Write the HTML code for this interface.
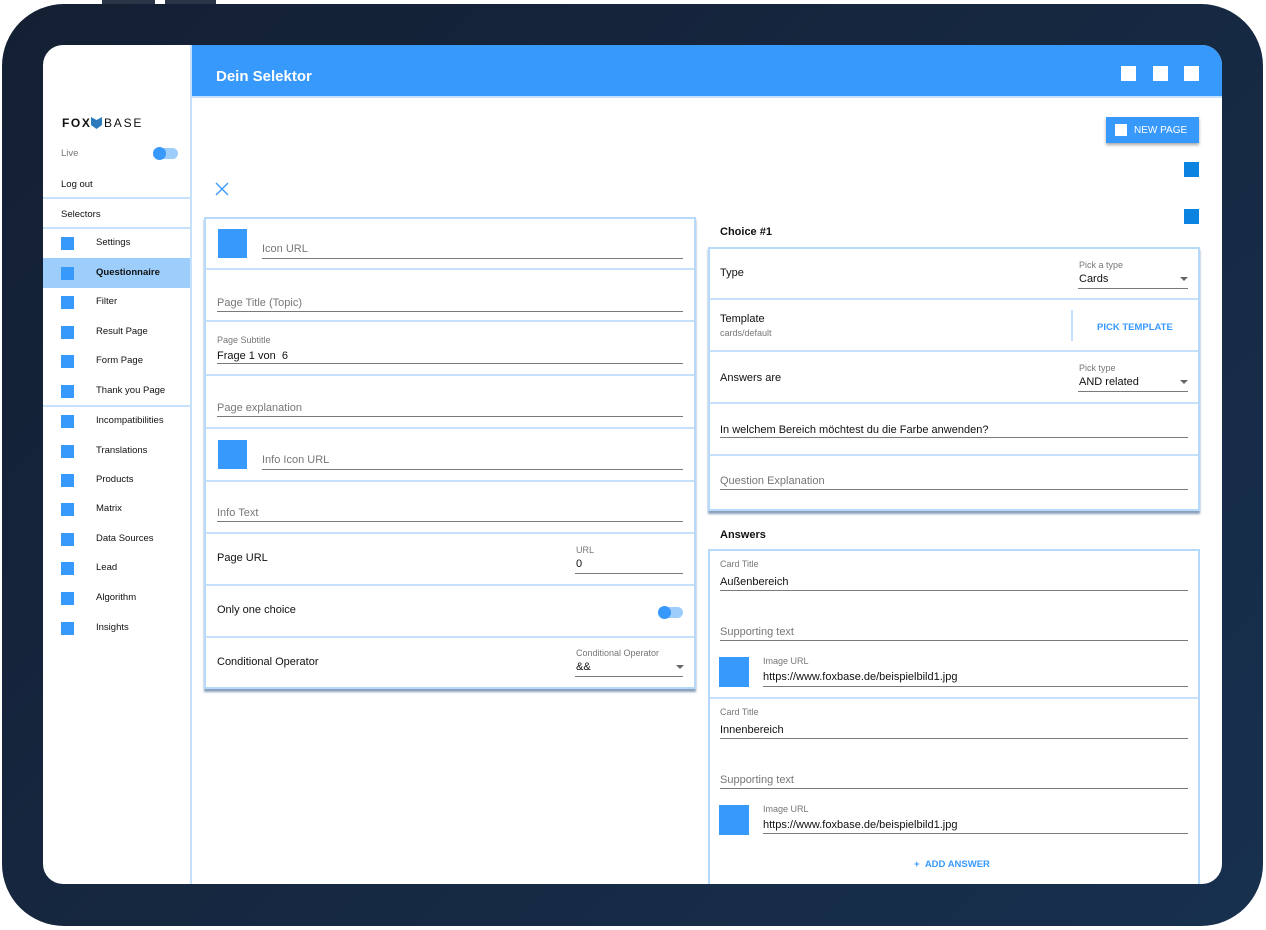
<!DOCTYPE html>
<html><head><meta charset="utf-8"><style>
*{margin:0;padding:0;box-sizing:border-box}
body{width:1266px;height:930px;background:#fff;position:relative;overflow:hidden;font-family:"Liberation Sans",Arial,sans-serif;color:#111}
div{position:absolute}
.t{white-space:nowrap;font-size:11px;line-height:13px}
.g{color:#777}
.s{font-size:9px;color:#777;line-height:11px}
.l{height:1px;background:#7a7a7a}
.sep{height:2px;background:#c5e1fb}
.sq{background:#3899fd}
.card{border:2px solid #b7d9fb;background:#fff;box-shadow:0 3px 2px rgba(40,80,130,.55)}
.ni{width:13px;height:13px;background:#3899fd;left:61px}
.nt{left:96px;font-size:9.5px;line-height:12px;white-space:nowrap}
.arr{width:0;height:0;border-left:4px solid transparent;border-right:4px solid transparent;border-top:4px solid #666}
</style></head><body>
<div style="left:102px;top:0;width:53px;height:4px;background:#2a3648"></div>
<div style="left:165px;top:0;width:51px;height:4px;background:#2a3648"></div>
<div style="left:2px;top:4px;width:1261px;height:922px;border-radius:62px;background:linear-gradient(135deg,#141f33,#17304e)"></div>
<div style="left:43px;top:45px;width:1179px;height:839px;border-radius:20px;background:#fff;overflow:hidden">
 <div style="left:148px;top:0;width:1031px;height:51px;background:#3899fd"></div>
 <div style="left:147px;top:0;width:2px;height:839px;background:#c5e1fb"></div>
 <div style="left:148px;top:51px;width:1031px;height:2px;background:#c5e1fb"></div>
 <div style="left:665px;top:504px;width:492px;height:340px;border:2px solid #b7d9fb;background:#fff"></div>
</div>
<div class="t" style="left:216px;top:68px;font-size:15px;line-height:18px;color:#fff;font-weight:bold">Dein Selektor</div>
<div style="left:1121px;top:66px;width:15px;height:15px;background:#fff"></div>
<div style="left:1153px;top:66px;width:15px;height:15px;background:#fff"></div>
<div style="left:1184px;top:66px;width:15px;height:15px;background:#fff"></div>
<!-- sidebar -->
<div class="t" style="left:62px;top:116px;font-size:12px;line-height:15px;letter-spacing:1.6px;font-weight:bold;color:#111">FOX</div>
<svg style="position:absolute;left:91px;top:117px" width="11" height="12"><path d="M0 0 L5.5 3 L11 0 L11 8 L5.5 12 L0 8Z" fill="#2d7bbd"/></svg>
<div class="t" style="left:104px;top:116px;font-size:12px;line-height:15px;letter-spacing:1.8px;color:#111">BASE</div>
<div class="t g" style="left:61px;top:147px;font-size:9.5px">Live</div>
<div style="left:153px;top:148px;width:25px;height:11px;border-radius:6px;background:#9ccdfb"></div>
<div style="left:153px;top:147px;width:13px;height:13px;border-radius:50%;background:#3899fd"></div>
<div class="t" style="left:61px;top:178px;font-size:9.5px">Log out</div>
<div class="sep" style="left:43px;top:197px;width:147px"></div>
<div class="t" style="left:61px;top:208px;font-size:9.5px">Selectors</div>
<div class="sep" style="left:43px;top:227px;width:147px"></div>
<div style="left:43px;top:258px;width:147px;height:30px;background:#9ccdfb"></div>
<div class="ni" style="top:237px"></div><div class="nt" style="top:237px">Settings</div>
<div class="ni" style="top:267px"></div><div class="nt" style="top:267px;font-weight:bold">Questionnaire</div>
<div class="ni" style="top:296px"></div><div class="nt" style="top:296px">Filter</div>
<div class="ni" style="top:326px"></div><div class="nt" style="top:326px">Result Page</div>
<div class="ni" style="top:355px"></div><div class="nt" style="top:355px">Form Page</div>
<div class="ni" style="top:385px"></div><div class="nt" style="top:385px">Thank you Page</div>
<div class="sep" style="left:43px;top:405px;width:147px"></div>
<div class="ni" style="top:415px"></div><div class="nt" style="top:415px">Incompatibilities</div>
<div class="ni" style="top:445px"></div><div class="nt" style="top:445px">Translations</div>
<div class="ni" style="top:474px"></div><div class="nt" style="top:474px">Products</div>
<div class="ni" style="top:503px"></div><div class="nt" style="top:503px">Matrix</div>
<div class="ni" style="top:533px"></div><div class="nt" style="top:533px">Data Sources</div>
<div class="ni" style="top:562px"></div><div class="nt" style="top:562px">Lead</div>
<div class="ni" style="top:592px"></div><div class="nt" style="top:592px">Algorithm</div>
<div class="ni" style="top:622px"></div><div class="nt" style="top:622px">Insights</div>
<!-- top right -->
<div style="left:1106px;top:117px;width:93px;height:26px;background:#3899fd;box-shadow:0 2px 3px rgba(0,0,0,.35)"></div>
<div style="left:1115px;top:124px;width:12px;height:12px;background:#fff"></div>
<div class="t" style="left:1134px;top:124px;font-size:10px;color:#fff">NEW PAGE</div>
<div style="left:1184px;top:162px;width:15px;height:15px;background:#0a84e0"></div>
<div style="left:1184px;top:209px;width:15px;height:15px;background:#0a84e0"></div>
<svg style="position:absolute;left:215px;top:182px" width="14" height="14"><path d="M1 1L13 13M13 1L1 13" stroke="#3899fd" stroke-width="1.3"/></svg>
<!-- left card -->
<div class="card" style="left:204px;top:217px;width:492px;height:472px"></div>
<div class="sep" style="left:206px;top:268px;width:488px"></div>
<div class="sep" style="left:206px;top:320px;width:488px"></div>
<div class="sep" style="left:206px;top:374px;width:488px"></div>
<div class="sep" style="left:206px;top:427px;width:488px"></div>
<div class="sep" style="left:206px;top:480px;width:488px"></div>
<div class="sep" style="left:206px;top:532px;width:488px"></div>
<div class="sep" style="left:206px;top:584px;width:488px"></div>
<div class="sep" style="left:206px;top:636px;width:488px"></div>
<div class="sq" style="left:218px;top:229px;width:29px;height:29px"></div>
<div class="t g" style="left:262px;top:243px">Icon URL</div><div class="l" style="left:262px;top:258px;width:421px"></div>
<div class="t g" style="left:217px;top:297px">Page Title (Topic)</div><div class="l" style="left:217px;top:311px;width:466px"></div>
<div class="t s" style="left:217px;top:335px">Page Subtitle</div>
<div class="t" style="left:217px;top:350px">Frage 1 von&nbsp; 6</div><div class="l" style="left:217px;top:363px;width:466px"></div>
<div class="t g" style="left:217px;top:402px">Page explanation</div><div class="l" style="left:217px;top:416px;width:466px"></div>
<div class="sq" style="left:218px;top:440px;width:29px;height:29px"></div>
<div class="t g" style="left:262px;top:454px">Info Icon URL</div><div class="l" style="left:262px;top:469px;width:421px"></div>
<div class="t g" style="left:217px;top:507px">Info Text</div><div class="l" style="left:217px;top:521px;width:466px"></div>
<div class="t" style="left:217px;top:552px">Page URL</div>
<div class="t s" style="left:576px;top:545px">URL</div>
<div class="t" style="left:576px;top:558px">0</div><div class="l" style="left:575px;top:573px;width:108px"></div>
<div class="t" style="left:217px;top:604px">Only one choice</div>
<div style="left:658px;top:607px;width:25px;height:11px;border-radius:6px;background:#9ccdfb"></div>
<div style="left:658px;top:606px;width:13px;height:13px;border-radius:50%;background:#3899fd"></div>
<div class="t" style="left:217px;top:656px">Conditional Operator</div>
<div class="t s" style="left:576px;top:648px">Conditional Operator</div>
<div class="t" style="left:576px;top:661px">&amp;&amp;</div><div class="arr" style="left:676px;top:665px"></div><div class="l" style="left:575px;top:676px;width:108px"></div>
<!-- right card 1 -->
<div class="t" style="left:720px;top:226px;font-weight:bold">Choice #1</div>
<div class="card" style="left:708px;top:247px;width:492px;height:264px"></div>
<div class="sep" style="left:710px;top:298px;width:488px"></div>
<div class="sep" style="left:710px;top:350px;width:488px"></div>
<div class="sep" style="left:710px;top:402px;width:488px"></div>
<div class="sep" style="left:710px;top:454px;width:488px"></div>
<div class="t" style="left:720px;top:267px">Type</div>
<div class="t s" style="left:1079px;top:260px">Pick a type</div>
<div class="t" style="left:1079px;top:273px">Cards</div><div class="arr" style="left:1180px;top:277px"></div><div class="l" style="left:1078px;top:288px;width:110px"></div>
<div class="t" style="left:720px;top:313px">Template</div>
<div class="t s" style="left:720px;top:328px">cards/default</div>
<div style="left:1071px;top:310px;width:2px;height:31px;background:#c5e1fb"></div>
<div class="t" style="left:1097px;top:321px;font-size:9.5px;font-weight:bold;color:#3899fd">PICK TEMPLATE</div>
<div class="t" style="left:720px;top:372px">Answers are</div>
<div class="t s" style="left:1079px;top:363px">Pick type</div>
<div class="t" style="left:1079px;top:376px">AND related</div><div class="arr" style="left:1180px;top:380px"></div><div class="l" style="left:1078px;top:391px;width:110px"></div>
<div class="t" style="left:720px;top:424px">In welchem Bereich möchtest du die Farbe anwenden?</div><div class="l" style="left:720px;top:437px;width:468px"></div>
<div class="t g" style="left:720px;top:475px">Question Explanation</div><div class="l" style="left:720px;top:489px;width:468px"></div>
<!-- answers -->
<div class="t" style="left:720px;top:529px;font-weight:bold">Answers</div>
<div class="sep" style="left:710px;top:697px;width:488px"></div>
<div class="t s" style="left:720px;top:559px">Card Title</div>
<div class="t" style="left:720px;top:576px">Außenbereich</div><div class="l" style="left:720px;top:590px;width:468px"></div>
<div class="t g" style="left:720px;top:626px">Supporting text</div><div class="l" style="left:720px;top:640px;width:468px"></div>
<div class="sq" style="left:719px;top:657px;width:30px;height:30px"></div>
<div class="t s" style="left:763px;top:656px">Image URL</div>
<div class="t" style="left:763px;top:671px">https://www.foxbase.de/beispielbild1.jpg</div><div class="l" style="left:763px;top:686px;width:425px"></div>
<div class="t s" style="left:720px;top:707px">Card Title</div>
<div class="t" style="left:720px;top:724px">Innenbereich</div><div class="l" style="left:720px;top:738px;width:468px"></div>
<div class="t g" style="left:720px;top:774px">Supporting text</div><div class="l" style="left:720px;top:788px;width:468px"></div>
<div class="sq" style="left:719px;top:805px;width:30px;height:30px"></div>
<div class="t s" style="left:763px;top:804px">Image URL</div>
<div class="t" style="left:763px;top:819px">https://www.foxbase.de/beispielbild1.jpg</div><div class="l" style="left:763px;top:833px;width:425px"></div>
<div class="t" style="left:914px;top:858px;font-size:9.5px;font-weight:bold;color:#3899fd">+&nbsp;&nbsp;ADD ANSWER</div>
</body></html>
